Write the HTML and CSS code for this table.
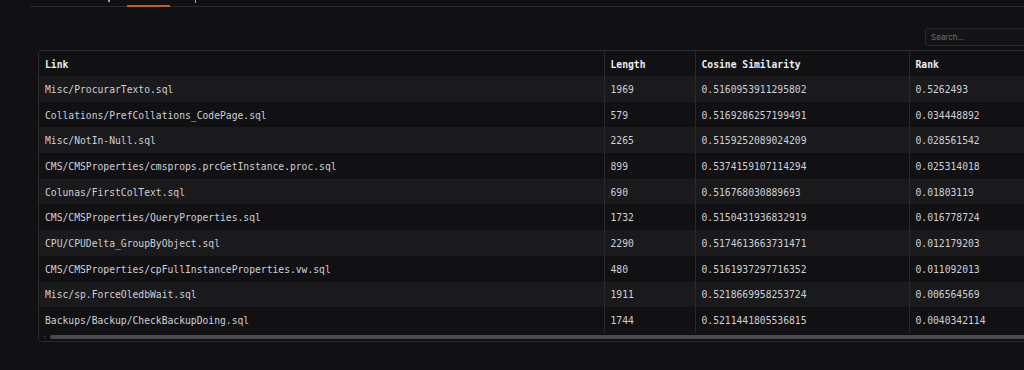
FILE: index.html
```html
<!DOCTYPE html>
<html>
<head>
<meta charset="utf-8">
<link rel="stylesheet" href="styles.css">
</head>
<body>
<div class="tabs">
  <div class="tab first"><span class="speck blue"></span></div>
  <div class="tab active"></div>
  <div class="tab last"><span class="speck gold"></span></div>
</div>
<div class="content">
  <div class="toolbar">
    <input class="search" type="text" placeholder="Search...">
  </div>
  <div class="grid">
    <table>
      <thead>
        <tr><th class="c1">Link</th><th class="c2">Length</th><th class="c3">Cosine Similarity</th><th class="c4">Rank</th></tr>
      </thead>
      <tbody>
        <tr><td>Misc/ProcurarTexto.sql</td><td>1969</td><td>0.5160953911295802</td><td>0.5262493</td></tr>
        <tr><td>Collations/PrefCollations_CodePage.sql</td><td>579</td><td>0.5169286257199491</td><td>0.034448892</td></tr>
        <tr><td>Misc/NotIn-Null.sql</td><td>2265</td><td>0.5159252089024209</td><td>0.028561542</td></tr>
        <tr><td>CMS/CMSProperties/cmsprops.prcGetInstance.proc.sql</td><td>899</td><td>0.5374159107114294</td><td>0.025314018</td></tr>
        <tr><td>Colunas/FirstColText.sql</td><td>690</td><td>0.516768030889693</td><td>0.01803119</td></tr>
        <tr><td>CMS/CMSProperties/QueryProperties.sql</td><td>1732</td><td>0.5150431936832919</td><td>0.016778724</td></tr>
        <tr><td>CPU/CPUDelta_GroupByObject.sql</td><td>2290</td><td>0.5174613663731471</td><td>0.012179203</td></tr>
        <tr><td>CMS/CMSProperties/cpFullInstanceProperties.vw.sql</td><td>480</td><td>0.5161937297716352</td><td>0.011092013</td></tr>
        <tr><td>Misc/sp.ForceOledbWait.sql</td><td>1911</td><td>0.5218669958253724</td><td>0.006564569</td></tr>
        <tr><td>Backups/Backup/CheckBackupDoing.sql</td><td>1744</td><td>0.5211441805536815</td><td>0.0040342114</td></tr>
      </tbody>
    </table>
    <div class="hscroll">
      <span class="arrow">‹</span>
      <div class="track"></div>
    </div>
  </div>
</div>
</body>
</html>
```

FILE: styles.css
```css
html, body {
  margin: 0;
  padding: 0;
  background: #111114;
  overflow: hidden;
  width: 1024px;
  height: 370px;
  font-family: "DejaVu Sans Mono", "Liberation Mono", monospace;
  color: #d4d4d8;
}

.tabs {
  display: flex;
  align-items: flex-end;
  margin-left: 30px;
  height: 6px;
  border-bottom: 1px solid #2a2a2e;
}

.tab {
  height: 6px;
  box-sizing: border-box;
  position: relative;
}

.tab.first {
  width: 97px;
}

.tab.active {
  width: 43px;
  border-bottom: 2px solid #c2621f;
  margin-bottom: -1px;
  height: 7px;
}

.tab.last {
  width: 120px;
}

.speck {
  position: absolute;
  top: 0;
  width: 2px;
  height: 2px;
}

.speck.blue {
  left: 78px;
  background: #8ea3c0;
}

.speck.gold {
  left: 25px;
  width: 1px;
  height: 3px;
  background: #c9a24a;
}

.content {
  width: 1032px;
  margin-left: 38px;
}

.toolbar {
  display: flex;
  justify-content: flex-end;
  padding-top: 21px;
  height: 18px;
  margin-bottom: 4px;
}

.search {
  width: 145px;
  height: 18px;
  box-sizing: border-box;
  background: #141417;
  border: 1px solid #2a2a2e;
  border-radius: 3px;
  color: #cfcfd4;
  font-family: "Inter", "Liberation Sans", sans-serif;
  font-size: 8px;
  padding: 0 5px;
  outline: none;
}

.search::placeholder {
  color: #6e6e74;
}

.grid {
  border: 1px solid #2a2a2e;
  border-radius: 3px;
  overflow: hidden;
}

table {
  width: 100%;
  border-collapse: collapse;
  table-layout: fixed;
  font-size: 9.7px;
}

th, td {
  text-align: left;
  padding: 1px 0 0 6px;
  white-space: nowrap;
  border-left: 1px solid #2a2a2e;
  box-sizing: border-box;
}

th:first-child, td:first-child {
  border-left: none;
}

th {
  height: 25px;
  font-weight: bold;
  color: #ededf0;
  background: #111114;
}

td {
  height: 25.7px;
  color: #cfcfd4;
}

tbody tr:nth-child(odd) td {
  background: #1a1a1d;
}

tbody tr:nth-child(even) td {
  background: #111114;
}

.c1 { width: 565px; }
.c2 { width: 91px; }
.c3 { width: 214px; }

.hscroll {
  display: flex;
  align-items: center;
  height: 8px;
  background: #111114;
}

.arrow {
  width: 11px;
  font-size: 7px;
  color: #555;
  text-align: center;
  line-height: 8px;
}

.track {
  flex: 1;
  height: 4px;
  background: #4a4a4e;
  border-radius: 2px;
}
```
